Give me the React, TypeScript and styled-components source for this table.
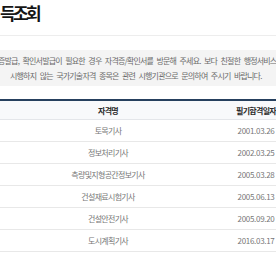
import React from "react";
import styled, { createGlobalStyle } from "styled-components";

const Global = createGlobalStyle`
  html, body { margin: 0; padding: 0; background: #fff; overflow: hidden; }
  body { font-family: "Noto Sans CJK KR", "Noto Sans", sans-serif; }
`;

const Page = styled.div`
  width: 276px;
  height: 260px;
  overflow: hidden;
  display: flex;
  flex-direction: column;
`;

const TitleBar = styled.div`
  height: 36px;
  border-bottom: 1px solid #ededed;
  display: flex;
  align-items: flex-start;
  box-sizing: border-box;
`;

const Title = styled.h2`
  margin: 0;
  font-size: 17px;
  font-weight: 700;
  letter-spacing: -2.6px;
  color: #151515;
  line-height: 25px;
  white-space: nowrap;
`;

const Notice = styled.div`
  margin-top: 14px;
  height: 36px;
  background: #f4f4f4;
  box-sizing: border-box;
  padding-top: 3px;
  display: flex;
  flex-direction: column;
`;

const NoticeLine = styled.p<{ $indent: number }>`
  margin: 0;
  font-size: 8px;
  letter-spacing: -0.8px;
  word-spacing: 2.4px;
  line-height: 15px;
  color: #6a6a6a;
  white-space: nowrap;
  text-indent: ${(p) => p.$indent}px;
`;

const Table = styled.div`
  margin-top: 13px;
  width: 360px;
  border-top: 2px solid #26405e;
  display: flex;
  flex-direction: column;
`;

const Row = styled.div<{ $head?: boolean }>`
  display: grid;
  grid-template-columns: 216px 80px 64px;
  height: ${(p) => (p.$head ? 18 : 21)}px;
  border-bottom: 1px solid ${(p) => (p.$head ? "#e4e6ea" : "#e8e8e8")};
  background: ${(p) => (p.$head ? "#f8f9fb" : "#fff")};
  align-items: center;
`;

const Cell = styled.div<{ $head?: boolean; $num?: boolean }>`
  text-align: center;
  font-size: 8px;
  letter-spacing: ${(p) => (p.$num ? "-0.3px" : "-0.7px")};
  font-weight: ${(p) => (p.$head ? 700 : 400)};
  color: ${(p) => (p.$head ? "#2a2a2a" : "#777")};
  white-space: nowrap;
`;

const rows = [
  ["토목기사", "2001.03.26"],
  ["정보처리기사", "2002.03.25"],
  ["측량및지형공간정보기사", "2005.03.28"],
  ["건설재료시험기사", "2005.06.13"],
  ["건설안전기사", "2005.09.20"],
  ["도시계획기사", "2016.03.17"],
];

export default function App() {
  return (
    <Page>
      <Global />
      <TitleBar>
        <Title>득조회</Title>
      </TitleBar>
      <Notice>
        <NoticeLine $indent={-2}>
          증발급, 확인서발급이 필요한 경우 자격증/확인서를 방문해 주세요. 보다 친절한 행정서비스를 제공하겠습니다.
        </NoticeLine>
        <NoticeLine $indent={10}>
          시행하지 않는 국가기술자격 종목은 관련 시행기관으로 문의하여 주시기 바랍니다.
        </NoticeLine>
      </Notice>
      <Table>
        <Row $head>
          <Cell $head>자격명</Cell>
          <Cell $head>필기합격일자</Cell>
          <Cell $head>실기합격일자</Cell>
        </Row>
        {rows.map(([name, date]) => (
          <Row key={name}>
            <Cell>{name}</Cell>
            <Cell $num>{date}</Cell>
            <Cell $num></Cell>
          </Row>
        ))}
      </Table>
    </Page>
  );
}
